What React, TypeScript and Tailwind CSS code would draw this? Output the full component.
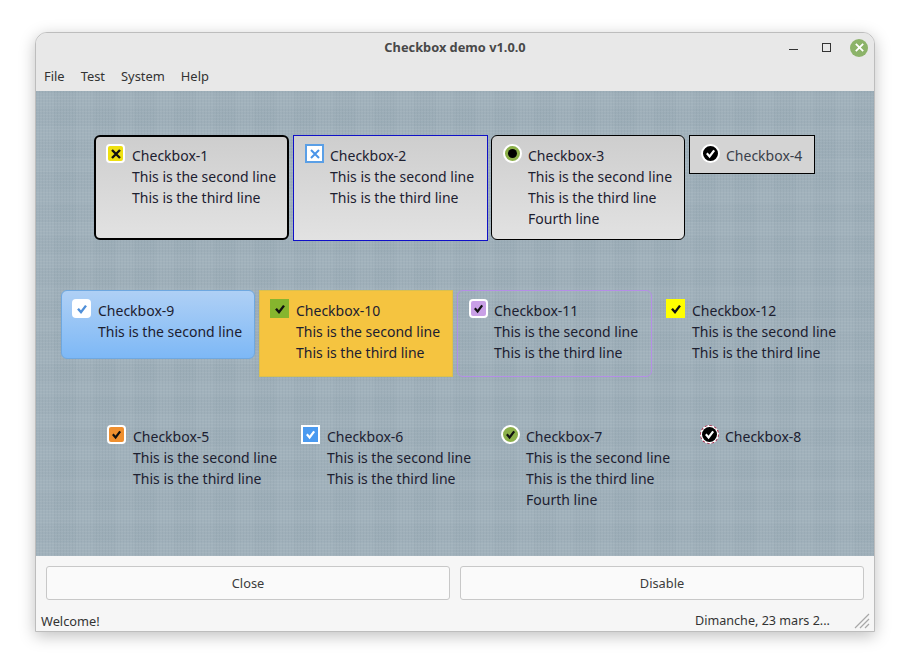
import { ReactNode } from "react";

const Tick = ({ color, size = 12 }: { color: string; size?: number }) => (
  <svg width={size} height={size} viewBox="0 0 12 12" fill="none">
    <path d="M2 5.8 L5 9.2 L10 2.6" stroke={color} strokeWidth="2.4" />
  </svg>
);

const Cross = ({ color, size = 12, weight = 2 }: { color: string; size?: number; weight?: number }) => (
  <svg width={size} height={size} viewBox="0 0 12 12" fill="none">
    <path d="M2 2 L10 10 M10 2 L2 10" stroke={color} strokeWidth={weight} />
  </svg>
);

interface ICheckItemProps {
  name: string;
  lines: string[];
  indicator: string;
  mark: ReactNode;
  className: string;
  textClass?: string;
}

const CheckItem = ({ name, lines, indicator, mark, className, textClass = "ml-2" }: ICheckItemProps) => {
  return (
    <div className={`flex items-start ${className}`}>
      <div className={`mt-[-1px] flex shrink-0 items-center justify-center ${indicator}`}>{mark}</div>
      <div className={`text-[14px] leading-[21px] whitespace-nowrap text-[#1c2030] ${textClass}`}>
        <div>{name}</div>
        {lines.map((line) => (
          <div key={line}>{line}</div>
        ))}
      </div>
    </div>
  );
};

const SECOND = "This is the second line";
const THIRD = "This is the third line";
const FOURTH = "Fourth line";

export default function App() {
  return (
    <div className="h-[667px] w-[912px] overflow-hidden bg-white pt-[32px] pl-[35px] font-['Noto_Sans',sans-serif]">
      <div className="flex h-[600px] w-[840px] flex-col overflow-hidden rounded-t-[12px] border border-[#bdbdbd] bg-[#f6f6f6] shadow-[0_4px_16px_rgba(0,0,0,0.25)]">
        <div className="flex h-[29px] shrink-0 items-center bg-[#e8e8e8]">
          <div className="w-[120px]" />
          <div className="flex-1 text-center text-[12.8px] font-bold text-[#484848]">Checkbox demo v1.0.0</div>
          <div className="flex w-[120px] items-center justify-end pr-[6px]">
            <div className="mt-[4px] h-[1px] w-[9px] bg-[#333]" />
            <div className="ml-[24px] h-[9px] w-[9px] border border-[#333]" />
            <div className="ml-[19px] flex h-[18px] w-[18px] items-center justify-center rounded-full bg-[#8cb369]">
              <Cross color="#ffffff" size={11} />
            </div>
          </div>
        </div>
        <div className="flex h-[29px] shrink-0 items-center gap-[16px] bg-[#e8e8e8] pt-[1px] pl-[8px] text-[12.9px] text-[#333]">
          <span>File</span>
          <span>Test</span>
          <span>System</span>
          <span>Help</span>
        </div>

        <div className="h-[465px] shrink-0 bg-[#9fb0ba] bg-[image:repeating-linear-gradient(0deg,rgba(255,255,255,0.05)_0_1px,transparent_1px_3px),repeating-linear-gradient(90deg,rgba(60,80,95,0.05)_0_1px,transparent_1px_3px),repeating-linear-gradient(0deg,rgba(255,255,255,0.015)_0_14px,rgba(60,80,95,0.015)_14px_32px),repeating-linear-gradient(90deg,rgba(255,255,255,0.015)_0_18px,rgba(60,80,95,0.015)_18px_40px)] pt-[44px]">
          <div className="flex items-start pl-[58px]">
            <CheckItem
              name="Checkbox-1"
              lines={[SECOND, THIRD]}
              className="h-[105px] w-[195px] rounded-[6px] border-2 border-black bg-gradient-to-b from-[#cecece] to-[#e2e2e2] pt-[8px] pl-[10px]"
              indicator="h-[19px] w-[19px] rounded-[4px] border-2 border-white bg-[#eee010]"
              mark={<Cross color="#111111" size={12} weight={2.4} />}
              textClass="ml-[7px]"
            />
            <CheckItem
              name="Checkbox-2"
              lines={[SECOND, THIRD]}
              className="ml-[4px] h-[106px] w-[195px] border border-[#1010c8] bg-gradient-to-b from-[#cecece] to-[#e2e2e2] pt-[9px] pl-[11px]"
              indicator="h-[19px] w-[19px] border-2 border-[#5a9fe6] bg-white"
              mark={<Cross color="#4a94e8" size={12} />}
              textClass="ml-[6px]"
            />
            <CheckItem
              name="Checkbox-3"
              lines={[SECOND, THIRD, FOURTH]}
              className="ml-[3px] h-[105px] w-[194px] rounded-[6px] border border-black bg-gradient-to-b from-[#cecece] to-[#e2e2e2] pt-[9px] pl-[11px]"
              indicator="h-[19px] w-[19px] rounded-full border-2 border-white bg-[#8cb04a]"
              mark={<div className="h-[9px] w-[9px] rounded-full bg-black" />}
              textClass="ml-[6px]"
            />
            <CheckItem
              name="Checkbox-4"
              lines={[]}
              className="ml-[4px] h-[39px] w-[126px] border border-black bg-[#d4d4d4] pt-[9px] pl-[11px]"
              indicator="h-[19px] w-[19px] rounded-full border-2 border-white bg-black"
              mark={<Tick color="#ffffff" size={11} />}
              textClass="ml-[6px] !text-[#3a3f4a]"
            />
          </div>

          <div className="mt-[49px] flex items-start pl-[25px]">
            <CheckItem
              name="Checkbox-9"
              lines={[SECOND]}
              className="h-[69px] w-[194px] rounded-[6px] border border-[#6fa8e0] bg-gradient-to-b from-[#afd0f5] to-[#7db8f6] pt-[9px] pl-[10px]"
              indicator="h-[19px] w-[19px] rounded-[4px] bg-white"
              mark={<Tick color="#4f8fd8" size={12} />}
              textClass="ml-[7px]"
            />
            <CheckItem
              name="Checkbox-10"
              lines={[SECOND, THIRD]}
              className="ml-[4px] h-[87px] w-[194px] border border-[#d9c050] bg-[#f5c440] pt-[9px] pl-[10px]"
              indicator="h-[19px] w-[19px] bg-[#86b52e]"
              mark={<Tick color="#101010" size={12} />}
              textClass="ml-[7px]"
            />
            <CheckItem
              name="Checkbox-11"
              lines={[SECOND, THIRD]}
              className="ml-[4px] h-[87px] w-[195px] rounded-[6px] border border-[#b48ee6] pt-[9px] pl-[11px]"
              indicator="h-[19px] w-[19px] rounded-[4px] border-2 border-white bg-[#c9a0e6]"
              mark={<Tick color="#101010" size={11} />}
              textClass="ml-[6px]"
            />
            <CheckItem
              name="Checkbox-12"
              lines={[SECOND, THIRD]}
              className="ml-[3px] h-[87px] w-[194px] pt-[10px] pl-[11px]"
              indicator="h-[19px] w-[19px] bg-[#ffff00]"
              mark={<Tick color="#101010" size={12} />}
              textClass="ml-[7px]"
            />
          </div>

          <div className="mt-[49px] flex items-start pl-[59px]">
            <CheckItem
              name="Checkbox-5"
              lines={[SECOND, THIRD]}
              className="w-[194px] pl-[12px]"
              indicator="h-[19px] w-[19px] rounded-[4px] border-2 border-white bg-[#ef8f2e]"
              mark={<Tick color="#101010" size={11} />}
              textClass="ml-[7px]"
            />
            <CheckItem
              name="Checkbox-6"
              lines={[SECOND, THIRD]}
              className="w-[199px] pl-[12px]"
              indicator="h-[19px] w-[19px] border-2 border-white bg-[#4a9af0]"
              mark={<Tick color="#ffffff" size={11} />}
              textClass="ml-[7px]"
            />
            <CheckItem
              name="Checkbox-7"
              lines={[SECOND, THIRD, FOURTH]}
              className="w-[199px] pl-[13px]"
              indicator="h-[19px] w-[19px] rounded-full border-2 border-white bg-[#8cb04a]"
              mark={<Tick color="#101010" size={11} />}
              textClass="ml-[6px]"
            />
            <CheckItem
              name="Checkbox-8"
              lines={[]}
              className="w-[150px] pl-[13px]"
              indicator="h-[19px] w-[19px] rounded-full border border-dashed border-[#b03050] bg-white"
              mark={
                <div className="flex h-[15px] w-[15px] shrink-0 items-center justify-center rounded-full bg-black">
                  <Tick color="#ffffff" size={11} />
                </div>
              }
              textClass="ml-[6px]"
            />
          </div>
        </div>

        <div className="flex shrink-0 gap-[10px] px-[10px] pt-[10px]">
          <button className="h-[34px] flex-1 rounded-[3px] border border-[#c8c8c8] bg-[#fafafa] pt-[1px] text-[12.8px] text-[#3c3c3c]">Close</button>
          <button className="h-[34px] flex-1 rounded-[3px] border border-[#c8c8c8] bg-[#fafafa] pt-[1px] text-[12.8px] text-[#3c3c3c]">Disable</button>
        </div>
        <div className="mt-[13px] flex items-center px-[5px] text-[12.8px] leading-[16px] text-[#333]">
          <span>Welcome!</span>
          <span className="mr-[24px] ml-auto text-[12.6px]">Dimanche, 23 mars 2...</span>
          <svg width="16" height="16" viewBox="0 0 16 16" fill="none" className="mr-[-1px]">
            <path d="M1 15 L15 1 M6 15 L15 6 M11 15 L15 11" stroke="#a8a8a8" strokeWidth="1.2" />
          </svg>
        </div>
      </div>
    </div>
  );
}
